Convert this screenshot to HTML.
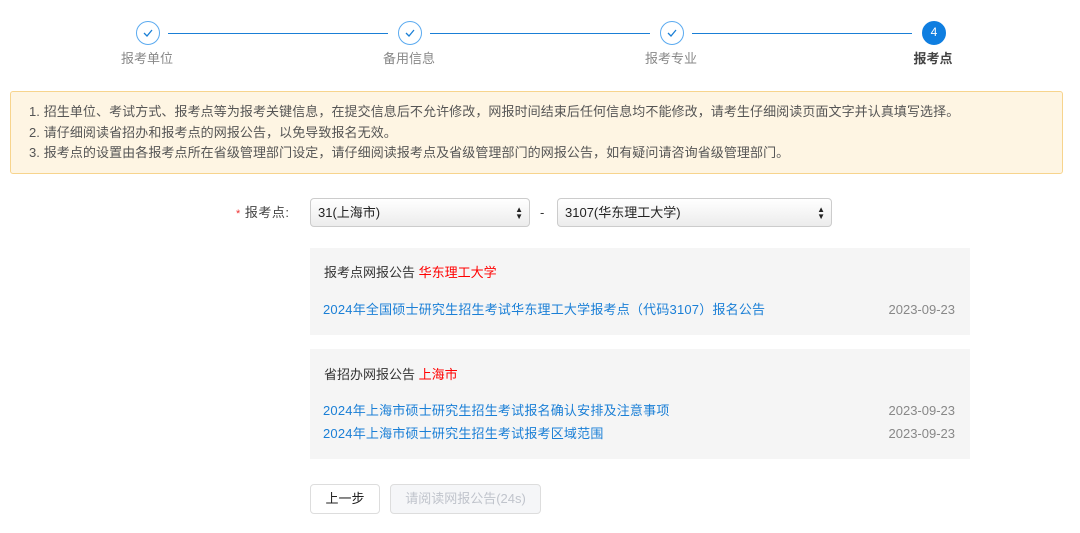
<!DOCTYPE html>
<html><head><meta charset="utf-8"><style>
*{margin:0;padding:0;box-sizing:border-box}
body{width:1080px;height:533px;background:#fff;font-family:"Liberation Sans","Noto Sans CJK SC",sans-serif;font-size:13px;color:#333;position:relative;overflow:hidden;line-height:18px}
.a{position:absolute;white-space:nowrap}
.c{position:absolute;width:24px;height:24px;border-radius:50%;border:1.5px solid #5aaaf0;background:#fff;top:21px}
.c svg{position:absolute;left:6px;top:7px}
.ln{position:absolute;top:33px;height:1px;background:#1a7fd6}
.lb{position:absolute;top:50px;color:#888;font-size:13px;width:80px;text-align:center}
.sel{position:absolute;top:198px;height:29px;border:1px solid #ccc;border-radius:4px;background:linear-gradient(#fff,#ececec);font-size:13px;color:#222;padding:5px 0 0 7px}
.sel i{position:absolute;right:6px;top:7px;font-style:normal;font-size:8px;line-height:7px;color:#222}
.pn{position:absolute;left:310px;width:660px;background:#f5f5f5}
.lk{color:#1a7fd6;letter-spacing:0.2px}
.dt{position:absolute;right:15px;color:#888}
</style></head><body>
<div class="ln" style="left:168px;width:220px"></div>
<div class="ln" style="left:430px;width:220px"></div>
<div class="ln" style="left:692px;width:220px"></div>
<div class="c" style="left:136px"><svg width="10" height="8" viewBox="0 0 10 8"><path d="M1 4l3 3 5-6" fill="none" stroke="#1a7fd6" stroke-width="1.3"/></svg></div>
<div class="c" style="left:398px"><svg width="10" height="8" viewBox="0 0 10 8"><path d="M1 4l3 3 5-6" fill="none" stroke="#1a7fd6" stroke-width="1.3"/></svg></div>
<div class="c" style="left:660px"><svg width="10" height="8" viewBox="0 0 10 8"><path d="M1 4l3 3 5-6" fill="none" stroke="#1a7fd6" stroke-width="1.3"/></svg></div>
<div class="c" style="left:922px;background:#0f7ee0;border-color:#0f7ee0;color:#fff;text-align:center;line-height:21px;font-size:12px">4</div>
<div class="lb" style="left:107px">报考单位</div>
<div class="lb" style="left:369px">备用信息</div>
<div class="lb" style="left:631px">报考专业</div>
<div class="lb" style="left:893px;color:#444;font-weight:bold">报考点</div>

<div class="a" style="left:10px;top:91px;width:1053px;height:83px;background:#fef5e3;border:1px solid #f7d48d;border-radius:3px"></div>
<div class="a" style="left:29px;top:102px;line-height:20.5px;color:#555;letter-spacing:0.08px">1. 招生单位、考试方式、报考点等为报考关键信息，在提交信息后不允许修改，网报时间结束后任何信息均不能修改，请考生仔细阅读页面文字并认真填写选择。<br>2. 请仔细阅读省招办和报考点的网报公告，以免导致报名无效。<br>3. 报考点的设置由各报考点所在省级管理部门设定，请仔细阅读报考点及省级管理部门的网报公告，如有疑问请咨询省级管理部门。</div>

<div class="a" style="left:236px;top:204px;color:#444;letter-spacing:0.5px"><span style="color:#e33;font-size:11px">*</span> 报考点:</div>
<div class="sel" style="left:310px;width:220px">31(上海市)<i>▲<br>▼</i></div>
<div class="a" style="left:540px;top:204px">-</div>
<div class="sel" style="left:557px;width:275px">3107(华东理工大学)<i>▲<br>▼</i></div>

<div class="pn" style="top:248px;height:87px">
<div class="a" style="left:14px;top:16px">报考点网报公告 <span style="color:#f00">华东理工大学</span></div>
<div class="a lk" style="left:13px;top:53px">2024年全国硕士研究生招生考试华东理工大学报考点（代码3107）报名公告</div>
<div class="dt" style="top:53px">2023-09-23</div>
</div>
<div class="pn" style="top:349px;height:110px">
<div class="a" style="left:14px;top:17px">省招办网报公告 <span style="color:#f00">上海市</span></div>
<div class="a lk" style="left:13px;top:53px">2024年上海市硕士研究生招生考试报名确认安排及注意事项</div>
<div class="dt" style="top:53px">2023-09-23</div>
<div class="a lk" style="left:13px;top:76px">2024年上海市硕士研究生招生考试报考区域范围</div>
<div class="dt" style="top:76px">2023-09-23</div>
</div>

<div class="a" style="left:310px;top:484px;width:70px;height:30px;border:1px solid #ddd;border-radius:4px;text-align:center;line-height:28px;color:#222">上一步</div>
<div class="a" style="left:390px;top:484px;width:151px;height:30px;border:1px solid #ddd;border-radius:4px;background:#f5f6f8;text-align:center;line-height:28px;color:#c0c4cc">请阅读网报公告(24s)</div>
</body></html>
